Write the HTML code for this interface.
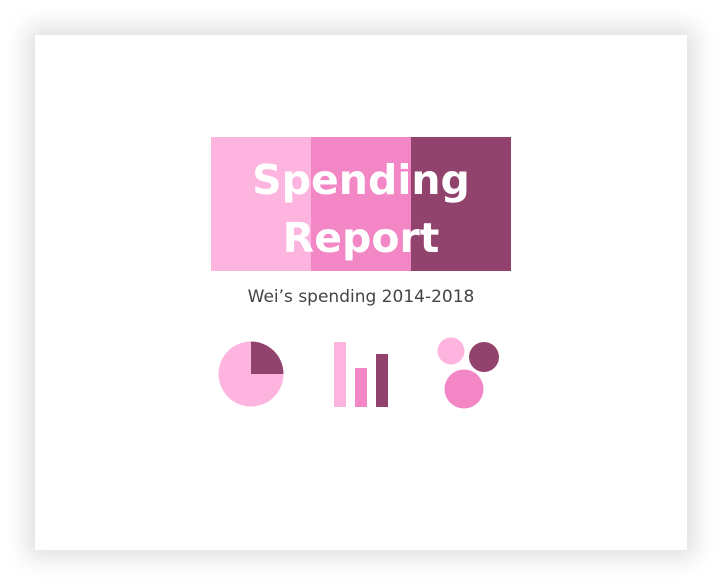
<!DOCTYPE html>
<html><head><style>
html,body{margin:0;padding:0;width:722px;height:586px;background:#fff;overflow:hidden}
.card{position:absolute;left:35px;top:35px;width:652px;height:515px;background:#fff;box-shadow:0 0 22px 8px rgba(0,0,0,0.13)}
.b{position:absolute;top:137px;height:134px;width:100px}
.t{position:absolute;left:211px;width:300px;text-align:center;color:#fff;font-family:"DejaVu Sans","Liberation Sans",sans-serif;font-weight:bold;font-size:41px;line-height:58px;top:151px}
.s{position:absolute;left:211px;width:300px;top:287px;text-align:center;color:#444;font-family:"DejaVu Sans","Liberation Sans",sans-serif;font-size:17px}
</style></head><body>
<div class="card"></div>
<div class="b" style="left:211px;background:#fdb4de"></div>
<div class="b" style="left:311px;background:#f386c5"></div>
<div class="b" style="left:411px;background:#92436d"></div>
<div class="t">Spending<br>Report</div>
<div class="s">Wei’s spending 2014-2018</div>
<svg style="position:absolute;left:0;top:0" width="722" height="586">
<circle cx="251" cy="374" r="32.5" fill="#fdb4de"/>
<path d="M251 374 L251 341.5 A32.5 32.5 0 0 1 283.5 374 Z" fill="#92436d"/>
<rect x="334" y="342" width="12" height="65" fill="#fdb4de"/>
<rect x="355" y="368" width="12" height="39" fill="#f386c5"/>
<rect x="376" y="354" width="12" height="53" fill="#92436d"/>
<circle cx="451" cy="351" r="13.5" fill="#fdb4de"/>
<circle cx="484" cy="357" r="15" fill="#92436d"/>
<circle cx="464" cy="389" r="19.5" fill="#f386c5"/>
</svg>
</body></html>
